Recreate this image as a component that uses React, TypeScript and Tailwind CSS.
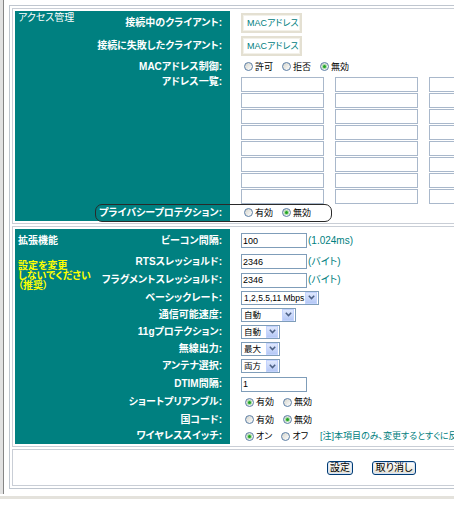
import React from 'react';

type RowProps = {
  h: string;
  label: string;
  top?: boolean;
  children?: React.ReactNode;
};

// one line of the settings table: teal label cell + white value cell
const Row = ({ h, label, top, children }: RowProps) => (
  <div className="flex">
    <div
      className={`${h} w-[135px] shrink-0 bg-[#008080] flex justify-end whitespace-nowrap pr-[8px] text-[10px] font-bold text-white ${
        top ? 'items-start pt-[1px]' : 'items-center'
      }`}
    >
      {label}
    </div>
    <div className={`${h} flex items-center whitespace-nowrap pl-[11px]`}>{children}</div>
  </div>
);

const Radio = ({ label, checked }: { label: string; checked?: boolean }) => (
  <span className="flex items-center">
    <span className="flex h-[9px] w-[9px] items-center justify-center rounded-full border border-[#5b7ea5] bg-linear-to-br from-[#d4d4cc] to-white">
      {checked && <span className="h-[3px] w-[3px] rounded-full bg-[#22a322] shadow-[0_0_0_1px_#a6dca6]" />}
    </span>
    <span className="ml-[2px] text-[9px] text-black">{label}</span>
  </span>
);

const TextBox = ({ value }: { value: string }) => (
  <div className="flex h-[15px] w-[66px] items-center border border-[#7f9db9] bg-white pl-[1px] text-[9px] text-black">
    {value}
  </div>
);

const Select = ({ value, className }: { value: string; className: string }) => (
  <div className={`${className} flex h-[14px] items-center justify-between border border-[#7f9db9] bg-white pr-px`}>
    <span className="whitespace-nowrap pl-[2px] text-[8.5px] text-black">{value}</span>
    <span className="flex h-[12px] w-[12px] shrink-0 items-center justify-center border border-[#c3d3fd] bg-linear-to-b from-[#dfe8fd] to-[#b5c8f5]">
      <svg width="7" height="5" viewBox="0 0 7 5">
        <path d="M0.8 0.8 L3.5 3.6 L6.2 0.8" fill="none" stroke="#4d6185" strokeWidth="1.5" />
      </svg>
    </span>
  </div>
);

const MacBox = () => (
  <div className="flex h-[20px] w-[61px] items-center whitespace-nowrap border-2 border-[#e4e0d2] bg-white pl-[4px] text-[9px] text-[#008080] shadow-[inset_0_0_0_1px_#f3f1e9]">
    MACアドレス
  </div>
);

const XpButton = ({ children, className }: { children: React.ReactNode; className: string }) => (
  <div
    className={`${className} flex h-[14px] items-center justify-center whitespace-nowrap rounded-[3px] border border-[#003c74] bg-linear-to-b from-white to-[#e3e0d3] text-[10px] text-black shadow-[inset_0_0_0_1px_#d6e3f7]`}
  >
    {children}
  </div>
);

export default function App() {
  return (
    <div className="relative h-[506px] w-[454px] overflow-hidden bg-white font-['Liberation_Sans','Noto_Sans_CJK_JP',sans-serif] leading-[12px] [font-feature-settings:'palt']">
      <div className="flex h-[494px]">
        <div className="w-[3px] shrink-0 bg-[#e2e2e2]" />
        <div className="w-px shrink-0 bg-[#858585]" />
        <div className="pl-[5px] pt-[5px]">
          <div className="flex w-[725px] flex-col gap-[2px] border border-[#bfc6cf] p-[2px]">
            {/* アクセス管理 */}
            <div className="border border-[#c9ced6] p-[2px]">
              <div className="relative flex">
                <div className="w-[80px] shrink-0 whitespace-nowrap bg-[#008080] pl-[3px] pt-[1px] text-[10px] text-white">
                  アクセス管理
                </div>
                <div className="flex flex-1 flex-col">
                  <Row h="h-[23px]" label="接続中のクライアント:">
                    <MacBox />
                  </Row>
                  <Row h="h-[23px]" label="接続に失敗したクライアント:">
                    <MacBox />
                  </Row>
                  <Row h="h-[19px]" label="MACアドレス制御:">
                    <div className="ml-[3px] flex gap-[9px]">
                      <Radio label="許可" />
                      <Radio label="拒否" />
                      <Radio label="無効" checked />
                    </div>
                  </Row>
                  <div className="flex">
                    <div className="flex h-[128px] w-[135px] shrink-0 justify-end whitespace-nowrap bg-[#008080] pr-[8px] text-[10px] font-bold text-white">
                      アドレス一覧:
                    </div>
                    <div className="h-[128px] pl-[11px] pt-px">
                      <div className="grid grid-cols-[83px_83px_83px_83px] gap-x-[11px] gap-y-px">
                        {Array.from({ length: 32 }).map((_, i) => (
                          <div key={i} className="h-[15px] border border-[#a9b8cb] bg-white" />
                        ))}
                      </div>
                    </div>
                  </div>
                  <Row h="h-[17px]" label="プライバシープロテクション:">
                    <div className="ml-[3px] flex gap-[9px]">
                      <Radio label="有効" />
                      <Radio label="無効" checked />
                    </div>
                  </Row>
                </div>
                {/* highlight round the privacy row */}
                <div className="absolute left-[80px] top-[193px] h-[18px] w-[237px] rounded-[7px] border-[1.5px] border-[#2a2a2a]" />
              </div>
            </div>

            {/* 拡張機能 */}
            <div className="border border-[#c9ced6] p-[2px]">
              <div className="flex">
                <div className="w-[80px] shrink-0 whitespace-nowrap bg-[#008080] pl-[3px] pt-[6px]">
                  <div className="text-[10px] font-bold text-white">拡張機能</div>
                  <div className="mt-[14px] text-[10px] font-bold leading-[10px] text-[#ffff00]">
                    設定を変更
                    <br />
                    しないでください
                    <br />
                    （推奨）
                  </div>
                </div>
                <div className="flex flex-1 flex-col">
                  <Row h="h-[23px]" label="ビーコン間隔:">
                    <TextBox value="100" />
                    <span className="ml-px text-[10px] text-[#008080]">(1.024ms)</span>
                  </Row>
                  <Row h="h-[19px]" label="RTSスレッショルド:">
                    <TextBox value="2346" />
                    <span className="ml-px text-[10px] text-[#008080]">(バイト)</span>
                  </Row>
                  <Row h="h-[18px]" label="フラグメントスレッショルド:">
                    <TextBox value="2346" />
                    <span className="ml-px text-[10px] text-[#008080]">(バイト)</span>
                  </Row>
                  <Row h="h-[17px]" label="ベーシックレート:">
                    <Select className="w-[78px]" value="1,2,5.5,11 Mbps" />
                  </Row>
                  <Row h="h-[17px]" label="通信可能速度:">
                    <Select className="w-[55px]" value="自動" />
                  </Row>
                  <Row h="h-[17px]" label="11gプロテクション:">
                    <Select className="w-[39px]" value="自動" />
                  </Row>
                  <Row h="h-[17px]" label="無線出力:">
                    <Select className="w-[39px]" value="最大" />
                  </Row>
                  <Row h="h-[18px]" label="アンテナ選択:">
                    <Select className="w-[39px]" value="両方" />
                  </Row>
                  <Row h="h-[18px]" label="DTIM間隔:">
                    <TextBox value="1" />
                  </Row>
                  <Row h="h-[18px]" label="ショートプリアンブル:">
                    <div className="ml-[4px] flex gap-[9px]">
                      <Radio label="有効" checked />
                      <Radio label="無効" />
                    </div>
                  </Row>
                  <Row h="h-[17px]" label="国コード:">
                    <div className="ml-[4px] flex gap-[9px]">
                      <Radio label="有効" />
                      <Radio label="無効" checked />
                    </div>
                  </Row>
                  <Row h="h-[16px]" label="ワイヤレススイッチ:">
                    <div className="ml-[4px] flex gap-[9px]">
                      <Radio label="オン" checked />
                      <Radio label="オフ" />
                    </div>
                    <span className="ml-[12px] text-[9px] text-[#008080]">
                      [注]本項目のみ、変更するとすぐに反映されます。
                    </span>
                  </Row>
                </div>
              </div>
            </div>

            {/* 設定 / 取り消し */}
            <div className="border border-[#c9ced6] p-[2px]">
              <div className="flex h-[31px] items-start justify-center gap-[19px] pt-[9px]">
                <XpButton className="w-[26px]">設定</XpButton>
                <XpButton className="w-[44px]">取り消し</XpButton>
              </div>
            </div>
          </div>
        </div>
      </div>
      <div className="mt-[2px] h-[3px] bg-[#e4e2dc]" />
    </div>
  );
}
